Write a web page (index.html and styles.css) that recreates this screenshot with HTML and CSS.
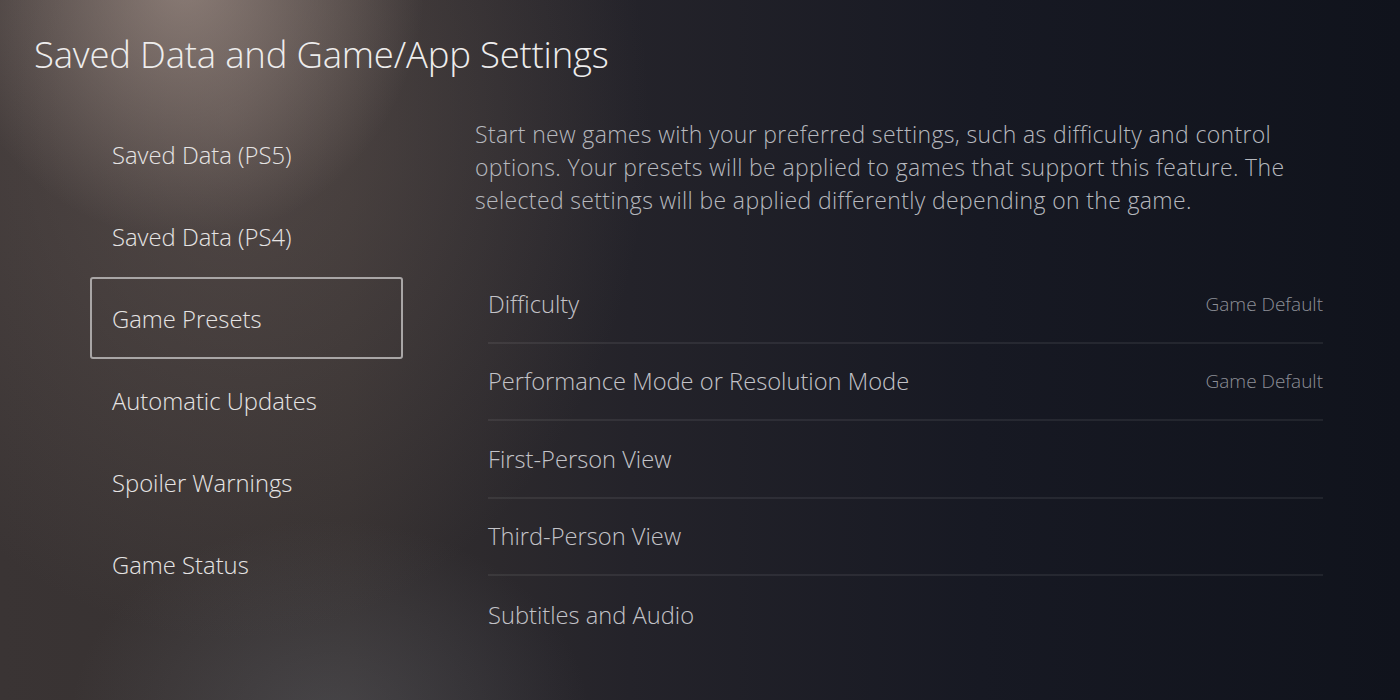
FILE: index.html
```html
<!DOCTYPE html>
<html lang="en">
<head>
    <meta charset="UTF-8">
    <meta name="viewport" content="width=device-width, initial-scale=1.0">
    <title>Saved Data and Game/App Settings</title>
    <link rel="stylesheet" href="styles.css">
</head>
<body>
    <div class="screen">
        <h1 class="title">Saved Data and Game/App Settings</h1>

        <div class="main">
            <ul class="nav">
                <li class="nav-item">Saved Data (PS5)</li>
                <li class="nav-item">Saved Data (PS4)</li>
                <li class="nav-item selected">Game Presets</li>
                <li class="nav-item">Automatic Updates</li>
                <li class="nav-item">Spoiler Warnings</li>
                <li class="nav-item">Game Status</li>
            </ul>

            <div class="content">
                <p class="description">
                    Start new games with your preferred settings, such as difficulty and control<br>
                    options. Your presets will be applied to games that support this feature. The<br>
                    selected settings will be applied differently depending on the game.
                </p>

                <div class="options">
                    <div class="option">
                        <span class="label">Difficulty</span>
                        <span class="value">Game Default</span>
                    </div>
                    <div class="option">
                        <span class="label">Performance Mode or Resolution Mode</span>
                        <span class="value">Game Default</span>
                    </div>
                    <div class="option">
                        <span class="label">First-Person View</span>
                    </div>
                    <div class="option">
                        <span class="label">Third-Person View</span>
                    </div>
                    <div class="option last">
                        <span class="label">Subtitles and Audio</span>
                    </div>
                </div>
            </div>
        </div>
    </div>
</body>
</html>
```

FILE: styles.css
```css
html, body {
    margin: 0;
    height: 100%;
}

body {
    font-family: "Open Sans", "Noto Sans", sans-serif;
    font-weight: 300;
    color: #e8e6e6;
    overflow: hidden;
    background-color: #12141c;
    background-image:
        radial-gradient(ellipse 240px 260px at 185px -20px, rgba(190, 170, 160, 0.55), rgba(190, 170, 160, 0) 100%),
        radial-gradient(ellipse 420px 520px at 230px 120px, rgba(120, 105, 100, 0.4), rgba(120, 105, 100, 0) 100%),
        radial-gradient(ellipse 260px 200px at 330px 720px, rgba(110, 115, 125, 0.3), rgba(110, 115, 125, 0) 100%),
        linear-gradient(90deg, #3a3434 0%, #353030 25%, #24232a 45%, #171923 70%, #10131c 100%);
}

.screen {
    width: 1400px;
    height: 700px;
}

.title {
    margin: 0;
    padding: 31px 0 0 34px;
    font-size: 36.5px;
    font-weight: 300;
    line-height: 46px;
    color: #eeeded;
    letter-spacing: -0.2px;
}

.main {
    display: flex;
    gap: 72px;
    margin-top: 36px;
    padding-left: 90px;
}

.nav {
    list-style: none;
    margin: 0;
    padding: 0;
    width: 313px;
}

.nav-item {
    box-sizing: border-box;
    height: 82px;
    display: flex;
    align-items: center;
    padding: 2px 0 0 20px;
    font-size: 23.8px;
    color: #e6e4e4;
    border: 2px solid transparent;
    border-radius: 3px;
}

.nav-item.selected {
    border-color: #a9a6a6;
}

.content {
    width: 850px;
}

.description {
    margin: 5px 0 0;
    font-size: 23px;
    letter-spacing: 0.35px;
    line-height: 33px;
    color: #b6b8be;
}

.options {
    margin-top: 49px;
    padding-left: 13px;
    width: 835px;
}

.option {
    height: 77.5px;
    display: flex;
    align-items: center;
    justify-content: space-between;
    border-bottom: 2px solid rgba(255, 255, 255, 0.07);
    box-sizing: border-box;
}

.option.last {
    border-bottom: none;
}

.label {
    font-size: 23.7px;
    color: #c3c3c8;
}

.value {
    font-size: 19px;
    color: #8d8f97;
}
```
